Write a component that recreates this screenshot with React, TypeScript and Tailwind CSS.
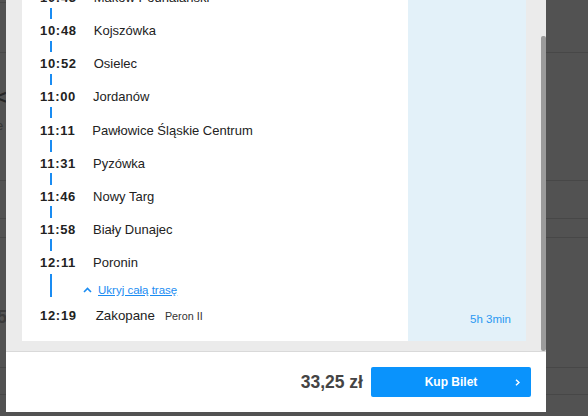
import React from 'react';

type Stop = {
  time: string;
  name: string;
};

const stops: Stop[] = [
  { time: '10:43', name: 'Maków Podhalański' },
  { time: '10:48', name: 'Kojszówka' },
  { time: '10:52', name: 'Osielec' },
  { time: '11:00', name: 'Jordanów' },
  { time: '11:11', name: 'Pawłowice Śląskie Centrum' },
  { time: '11:31', name: 'Pyzówka' },
  { time: '11:46', name: 'Nowy Targ' },
  { time: '11:58', name: 'Biały Dunajec' },
  { time: '12:11', name: 'Poronin' },
];

function StopRow({ time, name }: Stop) {
  return (
    <div className="flex items-center h-4 leading-4 text-[#222]">
      <span className="text-[13px] font-bold tracking-[0.7px]">{time}</span>
      <span className="text-[13px] ml-[17px] whitespace-nowrap">{name}</span>
    </div>
  );
}

export default function App() {
  return (
    <div className="relative w-[588px] h-[416px] overflow-hidden bg-[#525252] font-['Liberation_Sans',Arial,sans-serif]">
      {/* dimmed page behind the modal */}
      <div className="absolute inset-0 flex flex-col">
        <div className="h-[3px] border-b border-[#474747] w-[10px]" />
        <div className="h-[50px] border-b border-[#474747]" />
        <div className="h-[128px] border-b border-[#474747]" />
        <div className="h-[38px] border-b border-[#474747]" />
        <div className="h-[19px] border-b border-[#474747]" />
        <div className="h-[130px] border-b border-[#474747]" />
        <div className="h-[27px] border-b border-[#474747]" />
      </div>
      <div className="absolute left-[-5px] top-[89px] text-[20px] font-bold leading-4 text-[#262626]">&lt;</div>
      <div className="absolute left-[-4px] top-[118px] text-[13px] leading-4 text-[#363636]">e</div>
      <div className="absolute left-[-3px] top-[309px] text-[18px] font-bold leading-4 text-[#3a3a3a]">5</div>

      {/* modal */}
      <div className="absolute left-[6px] top-0 w-[540px] h-[412px] flex flex-col bg-white">
        <div className="h-[352px] flex bg-[#ebebeb] border-b border-[#d9d9d9]">
          <div className="flex-1 pl-4 pb-[10px] flex flex-col justify-end overflow-hidden">
            <div className="flex shrink-0">
              <div className="w-[386px] bg-white pl-[18px] pb-[17px]">
                {stops.map((s, i) => (
                  <div key={s.time}>
                    <StopRow time={s.time} name={s.name} />
                    {i < stops.length - 1 && (
                      <div className="h-[17.14px] pl-[10px] pt-[1.5px]">
                        <div className="h-[11.5px] w-[2px] bg-[#1a8cf2]" />
                      </div>
                    )}
                  </div>
                ))}
                <div className="flex pt-[3px] pb-[11px]">
                  <div className="ml-[10px] h-[23px] w-[2px] bg-[#1a8cf2]" />
                  <a
                    href="#"
                    className="ml-[31px] mt-[9px] flex items-center gap-[6px] h-[14px] text-[11.5px] leading-[14px] text-[#1a8cf2] underline"
                  >
                    <svg width="9" height="6" viewBox="0 0 9 6" fill="none">
                      <path d="M1 5L4.5 1.5L8 5" stroke="#1a8cf2" strokeWidth="1.6" />
                    </svg>
                    Ukryj całą trasę
                  </a>
                </div>
                <div className="flex items-center h-4 leading-4 text-[#222]">
                  <span className="text-[13px] font-bold tracking-[0.7px]">12:19</span>
                  <span className="text-[13.3px] ml-[19px]">Zakopane</span>
                  <span className="text-[10.8px] ml-[10px] text-[#333]">Peron II</span>
                </div>
              </div>
              <div className="w-[118px] bg-[#e3f1f9] flex items-end justify-end pr-[15px] pb-[15px]">
                <span className="text-[11.5px] leading-[14px] text-[#2a98f2]">5h 3min</span>
              </div>
            </div>
          </div>
          <div className="w-[20px] pl-[15px] pt-[36px]">
            <div className="h-full w-[5px] rounded-[2px] bg-[#9b9b9b]" />
          </div>
        </div>

        <div className="flex-1 flex items-center justify-end gap-2 pr-[15px]">
          <span className="text-[17.5px] font-bold text-[#444]">33,25 zł</span>
          <button className="relative w-[160px] h-[30px] rounded-[2px] bg-[#0a93fc] text-white text-[12px] font-bold flex items-center justify-center">
            Kup Bilet
            <svg className="absolute right-[11px] top-[12px]" width="5" height="7" viewBox="0 0 5 7" fill="none">
              <path d="M1 0.8L4 3.5L1 6.2" stroke="white" strokeWidth="1.5" />
            </svg>
          </button>
        </div>
      </div>
    </div>
  );
}
